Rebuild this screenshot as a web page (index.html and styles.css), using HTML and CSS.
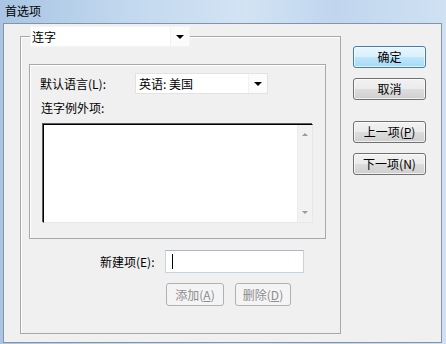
FILE: index.html
```html
<!DOCTYPE html>
<html lang="zh-CN">

<head>
    <meta charset="UTF-8">
    <title>首选项</title>
    <link rel="stylesheet" href="styles.css">
</head>

<body>
    <div class="window">
        <div class="titlebar">首选项</div>
        <div class="client">
            <div class="group">
                <!-- group caption is a combo box sitting on the border -->
                <div class="combo caption-combo">
                    <span class="combo-text">连字</span>
                    <span class="combo-arrow"></span>
                </div>

                <div class="inner-box">
                    <div class="lang-row">
                        <span class="label lang-label">默认语言(L):</span>
                        <div class="combo lang-combo">
                            <span class="combo-text">英语: 美国</span>
                            <span class="combo-arrow"></span>
                        </div>
                    </div>
                    <div class="label list-label">连字例外项:</div>
                    <div class="listbox">
                        <div class="list-area"></div>
                        <div class="scrollbar">
                            <span class="scroll-up"></span>
                            <span class="scroll-down"></span>
                        </div>
                    </div>
                </div>

                <div class="new-row">
                    <span class="label new-label">新建项(E):</span>
                    <div class="textbox"><span class="caret"></span></div>
                </div>
                <div class="action-row">
                    <button class="button disabled add-btn">添加(<u>A</u>)</button>
                    <button class="button disabled del-btn">删除(<u>D</u>)</button>
                </div>
            </div>

            <div class="side-buttons">
                <button class="button default">确定</button>
                <button class="button">取消</button>
                <button class="button spaced">上一项(<u>P</u>)</button>
                <button class="button">下一项(N)</button>
            </div>
        </div>
    </div>
</body>

</html>
```

FILE: styles.css
```css
/* Reset styles */
* {
    margin: 0;
    padding: 0;
    box-sizing: border-box;
}

body {
    font-family: "Noto Sans CJK SC", "Liberation Sans", sans-serif;
    font-size: 12px;
    color: #000;
    background: #bcd4ec;
}

u {
    text-decoration: underline;
    text-underline-offset: 1px;
}

/* Window frame */
.window {
    width: 446px;
    height: 344px;
    display: flex;
    flex-direction: column;
    background: linear-gradient(to right, #a9c5e3 0%, #c3d9ef 30%, #d2e3f4 55%, #c0d6ee 75%, #cfe1f3 100%);
}

.titlebar {
    height: 23px;
    padding-left: 5px;
    line-height: 21px;
    font-size: 12px;
    color: #000;
}

.client {
    flex: 1;
    margin: 0 4px 1px 3px;
    border: 1px solid #8494a8;
    background: #f0f0f0;
    display: flex;
    align-items: flex-start;
}

/* Main group box */
.group {
    position: relative;
    width: 321px;
    height: 298px;
    margin: 12px 0 0 16px;
    border: 1px solid #a8a8a8;
    box-shadow: inset 1px 1px 0 #ffffff;
    padding: 27px 0 0 8px;
}

.combo {
    display: flex;
    height: 21px;
    background: #fff;
    border: 1px solid #e2e2e2;
}

.combo-text {
    flex: 1;
    padding-left: 2px;
    line-height: 19px;
    border-right: 1px solid #f2f2f2;
}

.combo-arrow {
    width: 18px;
    position: relative;
    background: #fbfbfb;
}

.combo-arrow::after {
    content: "";
    position: absolute;
    left: 5px;
    top: 8px;
    border-left: 4px solid transparent;
    border-right: 4px solid transparent;
    border-top: 4px solid #000;
}

.caption-combo {
    position: absolute;
    top: -11px;
    left: 9px;
    width: 160px;
    border-color: #f4f4f4;
}

.caption-combo .combo-text {
    padding-left: 1px;
}

/* Inner language box */
.inner-box {
    width: 297px;
    height: 175px;
    border: 1px solid #a8a8a8;
    box-shadow: inset 1px 1px 0 #ffffff;
    padding: 8px 0 0 10px;
}

.lang-row {
    display: flex;
    align-items: center;
}

.label {
    line-height: 16px;
}

.lang-label {
    width: 95px;
}

.lang-combo {
    width: 133px;
}

.lang-combo .combo-text {
    padding-left: 3px;
}

.list-label {
    margin: 6px 0 0 1px;
}

.listbox {
    display: flex;
    width: 270px;
    height: 99px;
    margin: 8px 0 0 3px;
    background: #fff;
    border-top: 1px solid #000;
    border-left: 1px solid #000;
    border-right: 1px solid #e8e8e8;
    border-bottom: 1px solid #e8e8e8;
    box-shadow: -1px -1px 0 #5a5a5a;
}

.list-area {
    flex: 1;
}

.scrollbar {
    width: 15px;
    position: relative;
    background: #f2f2f2;
    border-left: 1px solid #ececec;
}

.scroll-up,
.scroll-down {
    position: absolute;
    left: 4px;
    border-left: 3px solid transparent;
    border-right: 3px solid transparent;
}

.scroll-up {
    top: 8px;
    border-bottom: 3px solid #9a9a9a;
}

.scroll-down {
    bottom: 8px;
    border-top: 3px solid #9a9a9a;
}

/* New item row */
.new-row {
    display: flex;
    align-items: center;
    margin: 11px 0 0 71px;
}

.new-label {
    width: 65px;
}

.textbox {
    width: 139px;
    height: 23px;
    background: #fff;
    border: 1px solid #c5d4e3;
    border-top-color: #abb7c4;
    padding: 3px 0 0 6px;
}

.caret {
    display: block;
    width: 1px;
    height: 15px;
    background: #000;
}

.action-row {
    display: flex;
    gap: 11px;
    margin: 10px 0 0 137px;
}

/* Buttons */
.button {
    font-family: inherit;
    font-size: 12px;
    height: 22px;
    line-height: 18px;
    border: 1px solid #707070;
    border-radius: 3px;
    color: #000;
    background: linear-gradient(to bottom, #f2f2f2 0%, #ebebeb 50%, #dddddd 51%, #cfcfcf 100%);
    box-shadow: inset 0 0 0 1px rgba(255, 255, 255, 0.7);
}

.button.default {
    border-color: #3c7fb1;
    background: linear-gradient(to bottom, #eaf6fd 0%, #d9f0fc 50%, #bee6fd 51%, #a7d9f5 100%);
}

.button.disabled {
    color: #8d8d8d;
    border-color: #adb2b5;
    background: #f4f4f4;
    box-shadow: none;
}

.add-btn {
    width: 58px;
    height: 23px;
}

.del-btn {
    width: 56px;
    height: 23px;
}

.side-buttons {
    display: flex;
    flex-direction: column;
    gap: 10px;
    margin: 22px 0 0 12px;
}

.side-buttons .button {
    width: 73px;
}

.side-buttons .spaced {
    margin-top: 11px;
}
```
